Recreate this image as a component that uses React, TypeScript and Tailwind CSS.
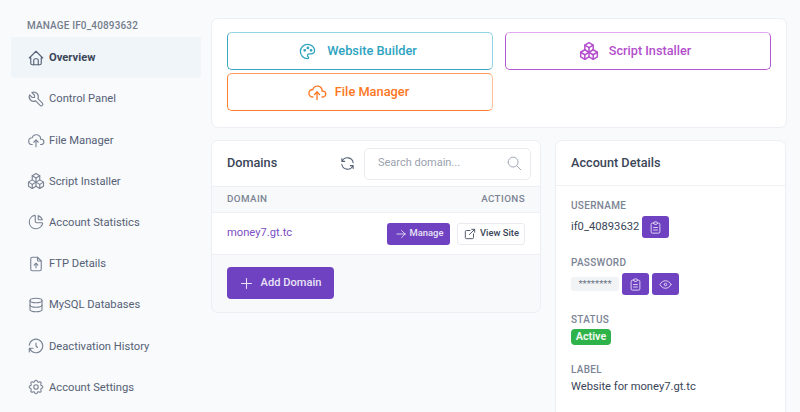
import type { ReactNode } from "react";
import {
  TbHome,
  TbTool,
  TbCloudUpload,
  TbPackages,
  TbChartPie,
  TbFileUpload,
  TbDatabase,
  TbHistory,
  TbSettings,
  TbPalette,
  TbRefresh,
  TbSearch,
  TbArrowRight,
  TbExternalLink,
  TbPlus,
  TbClipboardText,
  TbEye,
} from "react-icons/tb";

const navItems = [
  { label: "Overview", icon: TbHome, active: true },
  { label: "Control Panel", icon: TbTool },
  { label: "File Manager", icon: TbCloudUpload },
  { label: "Script Installer", icon: TbPackages },
  { label: "Account Statistics", icon: TbChartPie },
  { label: "FTP Details", icon: TbFileUpload },
  { label: "MySQL Databases", icon: TbDatabase },
  { label: "Deactivation History", icon: TbHistory },
  { label: "Account Settings", icon: TbSettings },
];

function IconButton({ children }: { children: ReactNode }) {
  return (
    <button className="flex h-[22px] w-[27px] items-center justify-center rounded-[3px] bg-[#6f42c1] text-[#e2d9f3]">
      {children}
    </button>
  );
}

function Label({ children }: { children: ReactNode }) {
  return (
    <div className="text-[10px] leading-[14px] font-medium tracking-[0.3px] text-[#7b8494]">
      {children}
    </div>
  );
}

export default function App() {
  return (
    <div className="flex h-[412px] w-[800px] overflow-hidden bg-[#f8fafc] font-['Roboto',sans-serif] text-[#3a4558]">
      {/* Sidebar */}
      <aside className="w-[211px] shrink-0 pt-[19px] pl-[11px] pr-[10px]">
        <div className="h-[18px] pl-[16px] text-[10px] leading-[14px] font-medium tracking-[0.15px] text-[#747d8d]">
          MANAGE IF0_40893632
        </div>
        <nav className="flex flex-col">
          {navItems.map((item) => {
            const Icon = item.icon;
            return (
              <a
                key={item.label}
                className={`flex h-[41.2px] items-center gap-[4px] pl-[16px] text-[11.2px] ${
                  item.active
                    ? "rounded-[2px] bg-[#f0f5f9] font-bold text-[#3a4558]"
                    : "text-[#566176]"
                }`}
              >
                <Icon
                  size={18}
                  strokeWidth={1.5}
                  className={`shrink-0 ${item.active ? "text-[#566176]" : "text-[#7b8494]"}`}
                />
                <span className="pt-[2px]">{item.label}</span>
              </a>
            );
          })}
        </nav>
      </aside>

      {/* Main */}
      <main className="w-[576px] pt-[18px]">
        <section className="grid h-[110px] grid-cols-2 content-start gap-x-[12px] gap-y-[3px] rounded-[7px] border border-[#eceff3] bg-white px-[15px] pt-[13px]">
          <button className="flex h-[38px] items-center justify-center gap-[10px] rounded-[5px] border border-[#3ba6c0] border-t-[#93d4e2] border-r-[#93d4e2] pr-[5px] text-[12.8px] font-medium text-[#2ea3bf]">
            <TbPalette size={19} strokeWidth={1.6} />
            Website Builder
          </button>
          <button className="flex h-[38px] items-center justify-center gap-[10px] rounded-[5px] border border-[#b657cf] border-t-[#e2a9f0] pr-[6px] text-[12.7px] font-medium text-[#b34fcc]">
            <TbPackages size={20} strokeWidth={1.8} />
            Script Installer
          </button>
          <button className="flex h-[38px] items-center justify-center gap-[8px] rounded-[5px] border border-[#fd7e2e] border-t-[#fd9a5c] border-r-[#fdbf94] pr-[4px] text-[12.8px] font-medium text-[#fd7622]">
            <TbCloudUpload size={20} strokeWidth={1.6} />
            File Manager
          </button>
        </section>

        <div className="mt-[12px] flex items-start gap-[14px]">
          {/* Domains */}
          <section className="h-[173px] w-[330px] overflow-hidden rounded-[7px] border border-[#eceff3] bg-[#f8f9fb]">
            <div className="flex h-[45px] items-center bg-white pl-[15px] pr-[9px]">
              <h2 className="pb-[2px] text-[12.7px] font-medium text-[#3a4558]">Domains</h2>
              <TbRefresh size={17} strokeWidth={1.5} className="ml-auto text-[#566176]" />
              <div className="ml-[8px] flex h-[32px] w-[167px] items-center justify-between rounded-[5px] border border-[#e8ebef] pl-[13px] pr-[7px] text-[11px] text-[#9aa2ae]">
                Search domain...
                <TbSearch size={17} strokeWidth={1.3} className="text-[#9aa2ae]" />
              </div>
            </div>
            <div className="flex h-[27px] items-center justify-between border-y border-[#eef0f3] bg-[#f8f9fb] pl-[15px] pr-[15px] text-[9.8px] font-medium tracking-[0.4px] text-[#7b8494]">
              <span>DOMAIN</span>
              <span>ACTIONS</span>
            </div>
            <div className="flex h-[42px] items-center justify-between border-b border-[#eef0f3] bg-white pl-[15px] pr-[15px]">
              <a className="text-[11.2px] text-[#7c4fc4]">money7.gt.tc</a>
              <div className="flex items-center gap-[7px]">
                <button className="flex h-[22px] w-[63px] items-center justify-center gap-[2px] rounded-[3px] bg-[#6f42c1] text-[9.4px] font-medium text-[#e9e2f6]">
                  <TbArrowRight size={14} strokeWidth={1.5} />
                  Manage
                </button>
                <button className="flex h-[22px] w-[68px] items-center justify-center gap-[3px] rounded-[3px] border border-[#e8ebef] bg-white text-[9.4px] font-medium text-[#3a4558]">
                  <TbExternalLink size={14} strokeWidth={1.5} />
                  View Site
                </button>
              </div>
            </div>
            <div className="pl-[15px] pt-[12px]">
              <button className="flex h-[32px] w-[107px] items-center justify-center gap-[6px] rounded-[4px] bg-[#6f42c1] pr-[2px] text-[11.1px] font-medium text-[#e9e2f6]">
                <TbPlus size={17} strokeWidth={1.5} />
                Add Domain
              </button>
            </div>
          </section>

          {/* Account details */}
          <section className="h-[290px] w-[231px] shrink-0 rounded-[7px] border border-[#eceff3] bg-white">
            <div className="flex h-[45px] items-center border-b border-[#eef0f3] pl-[15px]">
              <h2 className="text-[12.7px] font-medium text-[#3a4558]">Account Details</h2>
            </div>
            <div className="pl-[15px] pt-[13px] text-[11.2px] text-[#3a4558]">
              <Label>USERNAME</Label>
              <div className="mt-[3px] flex items-center gap-[3px]">
                if0_40893632
                <IconButton>
                  <TbClipboardText size={15} strokeWidth={1.5} />
                </IconButton>
              </div>
              <div className="mt-[18px]">
                <Label>PASSWORD</Label>
              </div>
              <div className="mt-[3px] flex items-center gap-[3px]">
                <span className="flex h-[14px] w-[48px] items-center justify-center rounded-[3px] bg-[#f2f3f5] text-[9.6px] leading-[14px] text-[#6b7688]">
                  ********
                </span>
                <IconButton>
                  <TbClipboardText size={15} strokeWidth={1.5} />
                </IconButton>
                <IconButton>
                  <TbEye size={15} strokeWidth={1.5} />
                </IconButton>
              </div>
              <div className="mt-[18px]">
                <Label>STATUS</Label>
              </div>
              <div className="mt-[2px] flex h-[16px] w-[40px] items-center justify-center rounded-[4px] bg-[#2eb24a] text-[10.8px] font-bold text-[#eaf7ec]">
                Active
              </div>
              <div className="mt-[18px]">
                <Label>LABEL</Label>
              </div>
              <div className="mt-[2px]">Website for money7.gt.tc</div>
            </div>
          </section>
        </div>
      </main>
    </div>
  );
}
